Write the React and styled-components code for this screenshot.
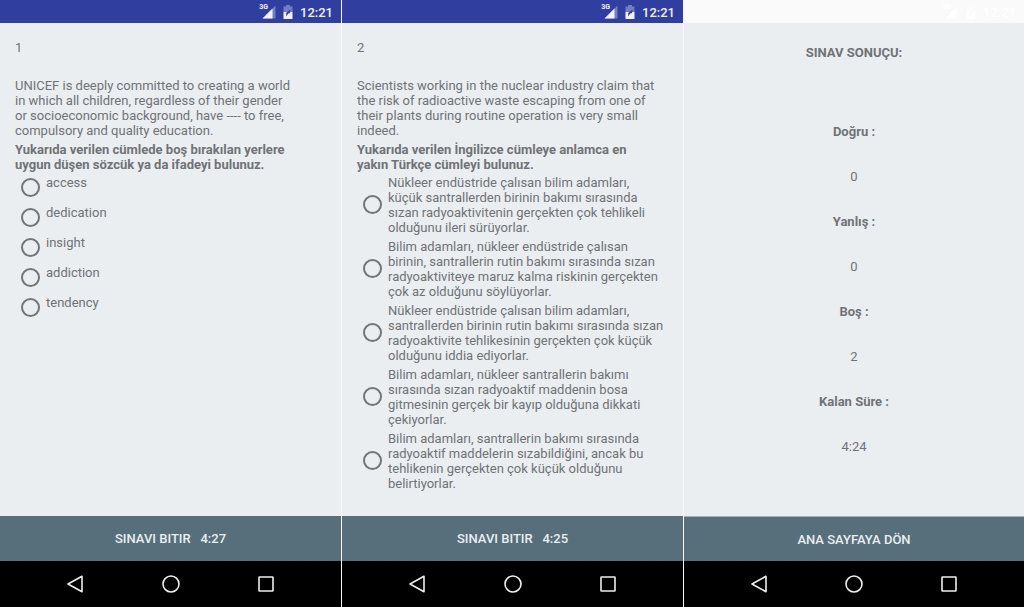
import React from "react";
import styled, { createGlobalStyle } from "styled-components";

const GlobalStyle = createGlobalStyle`
  * { box-sizing: border-box; }
  body {
    margin: 0;
    background: #fafafa;
    color: #707375;
    font-family: Roboto, "Liberation Sans", sans-serif;
    font-size: 13px;
    line-height: 15px;
  }
`;

const Gallery = styled.main`
  display: grid;
  grid-template-columns: 342fr 342fr 340fr;
  min-height: 100vh;
`;

const Phone = styled.section`
  display: flex;
  flex-direction: column;
  min-width: 0;
  background: #eaeef1;
  border-right: 1px solid #fafafa;
  &:last-child { border-right: 0; }
`;

const StatusBar = styled.header`
  display: flex;
  align-items: center;
  justify-content: flex-end;
  height: 23px;
  padding: 1px 8px 0 0;
  background: ${(p) => (p.$pale ? "#fafafa" : "#303f9f")};
  color: ${(p) => (p.$pale ? "#ffffff" : "#f1f3fa")};
  svg { display: block; }
`;

const Clock = styled.time`
  margin-left: 7px;
  font-size: 13px;
  font-weight: 500;
`;

const Network = styled.span`
  align-self: flex-start;
  padding-top: 2px;
  font-size: 7px;
  font-weight: 700;
  line-height: 9px;
  margin-right: -6px;
`;

const Battery = styled.svg`
  margin-left: 7px;
`;

const Body = styled.div`
  flex: 1;
  padding: 17px 15px 16px;
`;

const QuestionNumber = styled.p`
  margin: 0 0 23px;
`;

const Passage = styled.p`
  margin: 0 0 4px;
  white-space: pre-line;
`;

const Choices = styled.fieldset`
  min-width: 0;
  margin: 0;
  padding: 0;
  border: 0;
`;

const Prompt = styled.legend`
  padding: 0;
  font-weight: 700;
  white-space: pre-line;
`;

const Choice = styled.label`
  display: flex;
  align-items: center;
  gap: 6px;
  min-height: 30px;
  padding-left: 6px;
`;

const Radio = styled.input`
  appearance: none;
  flex: none;
  width: 19px;
  height: 19px;
  margin: 0;
  border: 2px solid #737577;
  border-radius: 50%;
  &:checked { box-shadow: inset 0 0 0 3px #eaeef1; background: #737577; }
`;

const ChoiceText = styled.span`
  align-self: flex-start;
  padding: 3px 0 1px;
  white-space: pre-line;
`;

const Result = styled.div`
  flex: 1;
  padding: 22px 15px 16px;
  text-align: center;
`;

const ResultTitle = styled.h1`
  margin: 0 0 64px;
  font-size: 13px;
  line-height: 15px;
  font-weight: 700;
`;

const Scores = styled.dl`
  display: grid;
  gap: 30px;
  margin: 0;
  dt { font-weight: 700; }
  dd { margin: 0; }
`;

const ActionButton = styled.button`
  height: 45px;
  padding: 0;
  border: 0;
  border-top: ${(p) => (p.$ruled ? "1px solid #a3b2ba" : "0")};
  background: #566f7b;
  color: #e9eef0;
  font: 500 13px/15px Roboto, "Liberation Sans", sans-serif;
  white-space: pre;
`;

const NavBar = styled.nav`
  display: grid;
  grid-template-columns: repeat(3, 28%);
  justify-content: center;
  height: 46px;
  background: #000000;
`;

const NavButton = styled.button`
  display: grid;
  place-items: center;
  padding: 0;
  border: 0;
  background: none;
  color: #eeeeee;
`;

function Status({ pale }) {
  return (
    <StatusBar $pale={pale}>
      <Network>3G</Network>
      <svg width="14" height="14" viewBox="0 0 14 14" fill="currentColor" aria-hidden="true">
        <path d="M13.5 0.5V13.5H0.5Z" opacity="0.35" />
        <path d="M10.5 3.5V13.5H0.5Z" />
      </svg>
      <Battery width="10" height="14" viewBox="0 0 10 14" fill="currentColor" aria-hidden="true">
        <path d="M3 0H7V1.5H9.5V7H0.5V1.5H3Z" opacity="0.35" />
        <path d="M0.5 7H9.5V14H0.5Z" />
        <path d="M7.5 4.5L7 8.3H5.6L3 11.6L3.4 8.6H2.4Z" fill={pale ? "#fafafa" : "#303f9f"} />
      </Battery>
      <Clock>12:21</Clock>
    </StatusBar>
  );
}

function Navigation() {
  const line = { width: 18, height: 18, viewBox: "0 0 18 18", fill: "none", stroke: "currentColor", strokeWidth: 1.6, "aria-hidden": true };
  return (
    <NavBar>
      <NavButton aria-label="Geri">
        <svg {...line}><path d="M16 1.3V16.7L2 9Z" strokeLinejoin="round" /></svg>
      </NavButton>
      <NavButton aria-label="Ana ekran">
        <svg {...line}><circle cx="9" cy="9" r="8" /></svg>
      </NavButton>
      <NavButton aria-label="Son uygulamalar">
        <svg {...line}><rect x="2" y="2" width="14" height="14" rx="0.5" /></svg>
      </NavButton>
    </NavBar>
  );
}

const questions = [
  {
    number: 1,
    time: "4:27",
    passage:
      "UNICEF is deeply committed to creating a world\nin which all children, regardless of their gender\nor socioeconomic background, have ---- to free,\ncompulsory and quality education.",
    prompt: "Yukarıda verilen cümlede boş bırakılan yerlere\nuygun düşen sözcük ya da ifadeyi bulunuz.",
    choices: ["access", "dedication", "insight", "addiction", "tendency"],
  },
  {
    number: 2,
    time: "4:25",
    passage:
      "Scientists working in the nuclear industry claim that\nthe risk of radioactive waste escaping from one of\ntheir plants during routine operation is very small\nindeed.",
    prompt: "Yukarıda verilen İngilizce cümleye anlamca en\nyakın Türkçe cümleyi bulunuz.",
    choices: [
      "Nükleer endüstride çalısan bilim adamları,\nküçük santrallerden birinin bakımı sırasında\nsızan radyoaktivitenin gerçekten çok tehlikeli\nolduğunu ileri sürüyorlar.",
      "Bilim adamları, nükleer endüstride çalısan\nbirinin, santrallerin rutin bakımı sırasında sızan\nradyoaktiviteye maruz kalma riskinin gerçekten\nçok az olduğunu söylüyorlar.",
      "Nükleer endüstride çalısan bilim adamları,\nsantrallerden birinin rutin bakımı sırasında sızan\nradyoaktivite tehlikesinin gerçekten çok küçük\nolduğunu iddia ediyorlar.",
      "Bilim adamları, nükleer santrallerin bakımı\nsırasında sızan radyoaktif maddenin bosa\ngitmesinin gerçek bir kayıp olduğuna dikkati\nçekiyorlar.",
      "Bilim adamları, santrallerin bakımı sırasında\nradyoaktif maddelerin sızabildiğini, ancak bu\ntehlikenin gerçekten çok küçük olduğunu\nbelirtiyorlar.",
    ],
  },
];

const scores = [
  ["Doğru :", "0"],
  ["Yanlış :", "0"],
  ["Boş :", "2"],
  ["Kalan Süre :", "4:24"],
];

function Question({ number, time, passage, prompt, choices }) {
  return (
    <Phone>
      <Status />
      <Body>
        <QuestionNumber>{number}</QuestionNumber>
        <Passage>{passage}</Passage>
        <Choices>
          <Prompt>{prompt}</Prompt>
          {choices.map((text, i) => (
            <Choice key={text} htmlFor={`q${number}-${i}`}>
              <Radio type="radio" id={`q${number}-${i}`} name={`q${number}`} />
              <ChoiceText>{text}</ChoiceText>
            </Choice>
          ))}
        </Choices>
      </Body>
      <ActionButton>{`SINAVI BITIR   ${time}`}</ActionButton>
      <Navigation />
    </Phone>
  );
}

export default function App() {
  return (
    <>
      <GlobalStyle />
      <Gallery>
        {questions.map((q) => (
          <Question key={q.number} {...q} />
        ))}
        <Phone>
          <Status pale />
          <Result>
            <ResultTitle>SINAV SONUÇU:</ResultTitle>
            <Scores>
              {scores.map(([label, value]) => (
                <React.Fragment key={label}>
                  <dt>{label}</dt>
                  <dd>{value}</dd>
                </React.Fragment>
              ))}
            </Scores>
          </Result>
          <ActionButton $ruled>ANA SAYFAYA DÖN</ActionButton>
          <Navigation />
        </Phone>
      </Gallery>
    </>
  );
}
